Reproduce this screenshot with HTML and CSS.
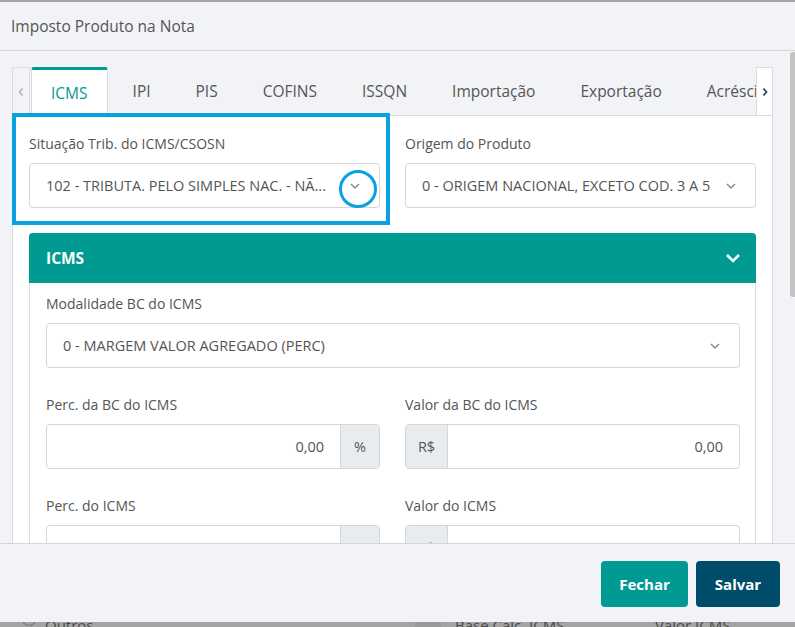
FILE: index.html
```html
<!DOCTYPE html>
<html lang="pt-BR">
<head>
<meta charset="utf-8">
<title>Imposto Produto na Nota</title>
<link rel="stylesheet" href="styles.css">
</head>
<body>
<div class="modal">
  <div class="modal-header">Imposto Produto na Nota</div>
  <div class="modal-body">
    <div class="body-main">
      <div class="tabs-nav">
        <div class="tab-arrow left">
          <svg width="8" height="10" viewBox="0 0 8 10"><polyline points="5.5,1.5 2.5,5 5.5,8.5" fill="none" stroke="#b0b0b0" stroke-width="1.4"/></svg>
        </div>
        <div class="tab-list">
          <div class="tab active">ICMS</div>
          <div class="tab">IPI</div>
          <div class="tab">PIS</div>
          <div class="tab">COFINS</div>
          <div class="tab">ISSQN</div>
          <div class="tab">Importação</div>
          <div class="tab">Exportação</div>
          <div class="tab">Acréscimos</div>
        </div>
        <div class="tab-arrow right">
          <svg width="8" height="10" viewBox="0 0 8 10"><polyline points="2.5,1.5 5.5,5 2.5,8.5" fill="none" stroke="#1f3550" stroke-width="1.6"/></svg>
        </div>
      </div>
      <div class="tab-content">
        <div class="row">
          <div class="field">
            <label class="lbl">Situação Trib. do ICMS/CSOSN</label>
            <div class="select">
              <span class="select-text">102 - TRIBUTA. PELO SIMPLES NAC. - NÃ...</span>
              <span class="chev ringed">
                <svg width="12" height="8" viewBox="0 0 12 8"><polyline points="2,2 6,6 10,2" fill="none" stroke="#8a8a8a" stroke-width="1.5"/></svg>
              </span>
            </div>
          </div>
          <div class="field">
            <label class="lbl">Origem do Produto</label>
            <div class="select">
              <span class="select-text">0 - ORIGEM NACIONAL, EXCETO COD. 3 A 5</span>
              <span class="chev">
                <svg width="12" height="8" viewBox="0 0 12 8"><polyline points="2,2 6,6 10,2" fill="none" stroke="#8a8a8a" stroke-width="1.5"/></svg>
              </span>
            </div>
          </div>
        </div>

        <div class="panel">
          <div class="panel-head">
            <span>ICMS</span>
            <svg width="16" height="10" viewBox="0 0 16 10"><polyline points="2,2 8,8 14,2" fill="none" stroke="#ffffff" stroke-width="2.6"/></svg>
          </div>
          <div class="panel-body">
            <div class="field full">
              <label class="lbl">Modalidade BC do ICMS</label>
              <div class="select">
                <span class="select-text">0 - MARGEM VALOR AGREGADO (PERC)</span>
                <span class="chev">
                  <svg width="12" height="8" viewBox="0 0 12 8"><polyline points="2,2 6,6 10,2" fill="none" stroke="#8a8a8a" stroke-width="1.5"/></svg>
                </span>
              </div>
            </div>
            <div class="grid">
              <div class="field">
                <label class="lbl">Perc. da BC do ICMS</label>
                <div class="input-group">
                  <span class="input">0,00</span>
                  <span class="addon pct">%</span>
                </div>
              </div>
              <div class="field">
                <label class="lbl">Valor da BC do ICMS</label>
                <div class="input-group">
                  <span class="addon rs">R$</span>
                  <span class="input">0,00</span>
                </div>
              </div>
              <div class="field">
                <label class="lbl">Perc. do ICMS</label>
                <div class="input-group">
                  <span class="input">0,00</span>
                  <span class="addon pct">%</span>
                </div>
              </div>
              <div class="field">
                <label class="lbl">Valor do ICMS</label>
                <div class="input-group">
                  <span class="addon rs">R$</span>
                  <span class="input">0,00</span>
                </div>
              </div>
            </div>
          </div>
        </div>
      </div>
      <div class="highlight"></div>
    </div>
    <div class="body-gap"></div>
    <div class="scrollbar"><div class="thumb"></div></div>
  </div>
  <div class="modal-footer">
    <button class="btn btn-close">Fechar</button>
    <button class="btn btn-save">Salvar</button>
  </div>
</div>
<div class="backdrop">
  <span class="bd-circle"></span>
  <span class="bd-text t1">Outros</span>
  <span class="bd-block"></span>
  <span class="bd-text t2">Base Calc. ICMS</span>
  <span class="bd-text t3">Valor ICMS</span>
</div>
</body>
</html>
```

FILE: styles.css
```css
* { box-sizing: border-box; }

html, body {
  margin: 0;
  padding: 0;
}

body {
  width: 795px;
  height: 627px;
  overflow: hidden;
  background: #a4a4a4;
  font-family: "Open Sans", "Noto Sans", sans-serif;
  color: #555;
}

.modal {
  margin-top: 2px;
  height: 620px;
  background: #f2f3f7;
  display: flex;
  flex-direction: column;
}

.modal-header {
  height: 49px;
  flex: 0 0 49px;
  border-bottom: 1px solid #d6d6d8;
  display: flex;
  align-items: center;
  padding-left: 11px;
  font-size: 15.5px;
  color: #555;
}

.modal-body {
  flex: 0 0 492px;
  height: 492px;
  display: flex;
  overflow: hidden;
}

.body-main {
  flex: 1;
  min-width: 0;
  padding: 16px 0 0 12px;
  position: relative;
}

.body-gap { flex: 0 0 17px; }

.scrollbar {
  flex: 0 0 5px;
  padding-top: 1px;
}

.thumb {
  height: 245px;
  background: #c3c3c3;
  border-radius: 3px 0 0 3px;
}

/* Tabs */
.tabs-nav {
  display: flex;
  align-items: flex-start;
  height: 48px;
  position: relative;
  z-index: 1;
}

.tab-arrow {
  flex: 0 0 18px;
  height: 48px;
  border: 1px solid #dcdcdc;
  display: flex;
  align-items: center;
  justify-content: center;
}

.tab-arrow.left {
  background: #f2f3f7;
  border-bottom: none;
  margin-right: 1px;
}

.tab-arrow.right {
  flex: 0 0 17px;
  background: #fff;
  border-bottom: none;
  height: 48px;
}

.tab-list {
  flex: 1;
  min-width: 0;
  display: flex;
  overflow: hidden;
  height: 49px;
}

.tab {
  flex: 0 0 auto;
  height: 48px;
  padding: 0 19px;
  margin-right: 5px;
  border: 1px solid transparent;
  display: flex;
  align-items: center;
  font-size: 15.5px;
  color: #555;
  white-space: nowrap;
}

.tab.active {
  height: 49px;
  background: #fff;
  color: #009a93;
  border-color: #dcdcdc;
  border-bottom: none;
  border-top: 3px solid #009a93;
  border-radius: 3px 3px 0 0;
}

.tab-content {
  background: #fff;
  border: 1px solid #dcdcdc;
  border-bottom: none;
  padding: 19px 16px 0 16px;
  height: 460px;
}

/* Fields */
.row {
  display: grid;
  grid-template-columns: 351px 351px;
  column-gap: 25px;
}

.field { display: flex; flex-direction: column; }

.lbl {
  display: block;
  font-size: 14px;
  line-height: 18px;
  height: 18px;
  margin-bottom: 10px;
  color: #555;
}

.select {
  height: 45px;
  border: 1px solid #d6d6d6;
  border-radius: 4px;
  background: #fff;
  display: flex;
  align-items: center;
  padding: 0 18px 0 16px;
}

.select-text {
  flex: 1;
  min-width: 0;
  font-size: 14.5px;
  color: #555;
  white-space: nowrap;
  overflow: hidden;
}

.chev {
  flex: 0 0 12px;
  height: 8px;
  display: flex;
  position: relative;
}

.ringed::after {
  content: "";
  position: absolute;
  left: -10px;
  top: -12px;
  width: 32px;
  height: 32px;
  border: 3px solid #0aa1e2;
  border-radius: 50%;
}

/* Panel */
.panel {
  margin-top: 25px;
  border: 1px solid #dcdcdc;
  border-top: none;
  border-radius: 4px 4px 0 0;
}

.panel-head {
  height: 50px;
  margin: 0 -1px;
  background: #009a93;
  border-radius: 4px 4px 0 0;
  display: flex;
  align-items: center;
  justify-content: space-between;
  padding: 0 15px 0 17px;
  color: #fff;
  font-size: 15.5px;
  font-weight: 700;
}

.panel-body {
  padding: 12px 15px 0 16px;
}

.field.full { margin-bottom: 28px; }

.grid {
  display: grid;
  grid-template-columns: 334px 335px;
  column-gap: 25px;
  row-gap: 28px;
}

.input-group {
  height: 45px;
  border: 1px solid #d6d6d6;
  border-radius: 4px;
  display: flex;
  overflow: hidden;
}

.input {
  flex: 1;
  display: flex;
  align-items: center;
  justify-content: flex-end;
  padding-right: 16px;
  font-size: 14.5px;
  color: #555;
}

.addon {
  display: flex;
  align-items: center;
  justify-content: center;
  background: #e9ecef;
  font-size: 14.5px;
  color: #555;
}

.addon.pct { flex: 0 0 39px; border-left: 1px solid #d6d6d6; }
.addon.rs { flex: 0 0 42px; border-right: 1px solid #d6d6d6; }

/* Annotation */
.highlight {
  position: absolute;
  left: 12px;
  top: 62px;
  width: 378px;
  height: 112px;
  border: 4px solid #0aa1e2;
  z-index: 2;
}

/* Footer */
.modal-footer {
  flex: 0 0 79px;
  border-top: 1px solid #d6d6d8;
  background: #f2f3f7;
  display: flex;
  justify-content: flex-end;
  align-items: flex-start;
  gap: 8px;
  padding: 17px 15px 0 0;
  position: relative;
  z-index: 3;
}

.btn {
  height: 46px;
  border: none;
  border-radius: 4px;
  color: #fff;
  font-family: "Open Sans", "Noto Sans", sans-serif;
  font-size: 15px;
  font-weight: 700;
  padding: 0;
}

.btn-close { width: 87px; background: #009a93; }
.btn-save { width: 84px; background: #004c6b; }

/* Backdrop strip */
.backdrop {
  height: 5px;
  position: relative;
  overflow: hidden;
  font-size: 15px;
  color: #4a4a4a;
}

.bd-text {
  position: absolute;
  top: -6px;
  line-height: 18px;
}

.t1 { left: 45px; }
.t2 { left: 455px; }
.t3 { left: 655px; }

.bd-circle {
  position: absolute;
  left: 20px;
  top: -20px;
  width: 18px;
  height: 24px;
  border: 1px solid #777;
  border-radius: 50%;
}

.bd-block {
  position: absolute;
  left: 415px;
  top: 0;
  width: 26px;
  height: 5px;
  background: #999;
}
```
